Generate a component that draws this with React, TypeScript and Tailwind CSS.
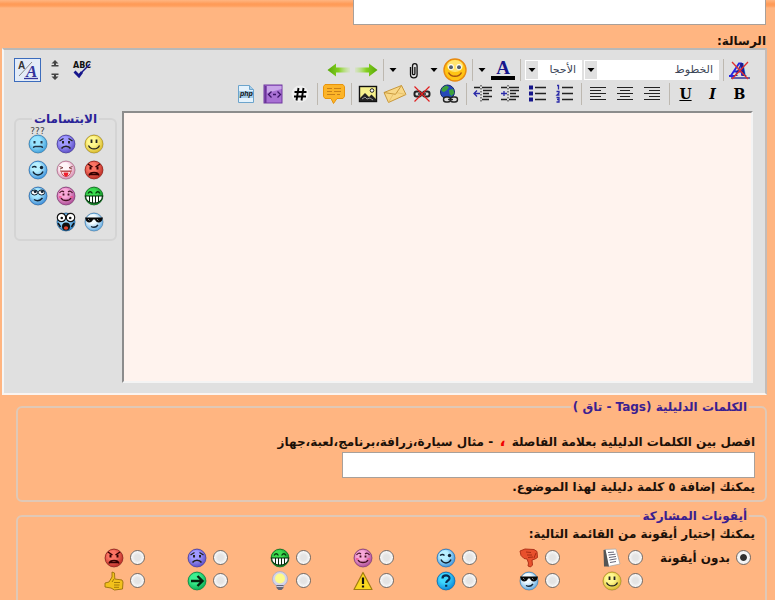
import { useState } from "react";
import type { ReactNode } from "react";

type Mood =
  | "smile"
  | "frown"
  | "confused"
  | "mad"
  | "tongue"
  | "wink"
  | "grin"
  | "blush"
  | "rolleyes"
  | "cool"
  | "eek";

// light and dark colour of every ball
const ballColors: Record<string, [string, string]> = {
  smile: ["#fff890", "#d8b828"],
  frown: ["#a09aff", "#5a4cc4"],
  confused: ["#98e4ff", "#3f9cd8"],
  mad: ["#fb7464", "#b82a22"],
  tongue: ["#fff4f8", "#d88cb0"],
  wink: ["#b8f0ff", "#3a90dc"],
  grin: ["#3cdc50", "#0f8a24"],
  blush: ["#f8a8d8", "#a84a94"],
  rolleyes: ["#a8e8ff", "#3a88d4"],
  cool: ["#f2fbff", "#5fa8e0"],
  eek: ["#9fdcff", "#2b7cc0"],
  question: ["#3fd8ff", "#0a86d8"],
  arrow: ["#3cf090", "#0aa850"],
};

const Ball = ({ kind, children }: { kind: string; children: ReactNode }) => {
  const [light, dark] = ballColors[kind];
  return (
    <svg viewBox="0 0 20 20" className="w-5 h-5 overflow-visible" fill="none" aria-hidden="true">
      <defs>
        <radialGradient id={`ball-${kind}`} cx="0.4" cy="0.35" r="0.7">
          <stop offset="0.35" stopColor={light} />
          <stop offset="1" stopColor={dark} />
        </radialGradient>
      </defs>
      <circle cx="10" cy="10" r="8.8" fill={`url(#ball-${kind})`} stroke={dark} strokeWidth="1" />
      <circle cx="10" cy="10" r="9.2" stroke="#404040" strokeOpacity="0.4" strokeWidth="0.6" />
      {children}
    </svg>
  );
};

const features: Record<Mood, ReactNode> = {
  smile: (
    <>
      <path d="M7.5 5.5V9M12.5 5.500V9" stroke="#222" strokeWidth="1.8" />
      <path d="M4.5 11.5c2 4.6 9 4.6 11 0" stroke="#222" strokeWidth="1.2" />
    </>
  ),
  frown: (
    <>
      <path d="M3.5 7l4-2.5M16.5 7l-4-2.5" stroke="#222" strokeWidth="1.3" />
      <path d="M7 7v2.5M13 7v2.5" stroke="#222" strokeWidth="2" />
      <path d="M5.5 14.5c2-3 7-3 9 0" stroke="#222" strokeWidth="1.5" />
    </>
  ),
  confused: (
    <>
      <path d="M6.5 7v2.5M13.5 7v2.5" stroke="#234" strokeWidth="2" />
      <path d="M5.5 14q0-1.500 1.500-1.500h6q1.500 0 1.500 1.500" stroke="#234" strokeWidth="1.4" />
    </>
  ),
  mad: (
    <>
      <path d="M4 4l4.5 3M16 4l-4.5 3" stroke="#300" strokeWidth="1.5" />
      <path d="M6.5 6.5v3M13.5 6.5v3" stroke="#300" strokeWidth="2" />
      <path d="M5 15.5c1-4 9-4 10 0M6 14.5h8" stroke="#300" strokeWidth="1.3" />
    </>
  ),
  tongue: (
    <>
      <path d="M3.5 6.5l3.500 1.2M16.5 6.5L13 7.7M4 9l3-1.3M16 9l-3-1.3" stroke="#733" strokeWidth="0.9" />
      <path d="M4 11h12" stroke="#a33" strokeWidth="0.9" />
      <path d="M5.5 11.500h9c0 6.500-9 6.500-9 0z" fill="#fff" stroke="#a33" strokeWidth="0.8" />
      <path d="M7.500 12.500h5c0 5.500-5 5.500-5 0z" fill="#f01c2c" />
    </>
  ),
  wink: (
    <>
      <path d="M4 7.500q2.500-2 4.500 0" stroke="#123" strokeWidth="1.3" />
      <circle cx="13.500" cy="7.500" r="1.700" fill="#123" />
      <path d="M5 11.500c2 4.500 8 4.500 10 0" stroke="#123" strokeWidth="1.5" />
    </>
  ),
  grin: (
    <>
      <path d="M4 7.5q2.200-3.5 4.400 0M11.600 7.500q2.200-3.500 4.400 0" stroke="#053a0c" strokeWidth="1.3" />
      <path d="M1.500 10h17c0 9.500-17 9.500-17 0z" fill="#fff" stroke="#052a0c" strokeWidth="1.1" />
      <path d="M5.500 10v6M8.500 10v7M11.500 10v7M14.500 10v6" stroke="#052a0c" strokeWidth="1" />
    </>
  ),
  blush: (
    <>
      <path d="M3.5 7q2-3 4.500-1M12 6q2.500-2 4.500 1" stroke="#412" strokeWidth="1.2" />
      <path d="M7.500 7.500v2M12.500 7.500v2" stroke="#412" strokeWidth="1.8" />
      <path d="M5 12c2 3.400 8 3.400 10 0" stroke="#412" strokeWidth="1.4" />
      <path d="M3 11h2.500M14.500 11H17" stroke="#f0508c" strokeWidth="1.5" />
    </>
  ),
  rolleyes: (
    <>
      <ellipse cx="6.5" cy="6.500" rx="3.2" ry="2.500" fill="#fff" stroke="#123" />
      <ellipse cx="13.500" cy="6.500" rx="3.2" ry="2.500" fill="#fff" stroke="#123" />
      <circle cx="7.200" cy="5.500" r="1.500" fill="#123" />
      <circle cx="14.200" cy="5.500" r="1.500" fill="#123" />
      <path d="M6 13.500c3 2 6 1.500 8.500-1.500" stroke="#123" strokeWidth="1.400" />
    </>
  ),
  cool: (
    <>
      <path d="M1 5.500h18l-.5 1.500c-.5 4.500-6.500 4.500-7.500.5H9c-1 4-7 4-7.500-.5z" fill="#080808" />
      <path d="M4 7l1.500 1.500M13 7l1.500 1.500" stroke="#aaa" strokeWidth="0.800" />
      <path d="M7 14.500c3 1.500 5.500.5 7-1.500" stroke="#123" strokeWidth="1.300" />
    </>
  ),
  eek: (
    <>
      <circle cx="5.5" cy="5.500" r="4.200" fill="#fff" stroke="#111" strokeWidth="1.200" />
      <circle cx="14.500" cy="5.500" r="4.200" fill="#fff" stroke="#111" strokeWidth="1.200" />
      <circle cx="5.800" cy="6" r="1.300" fill="#111" />
      <circle cx="14.200" cy="6" r="1.300" fill="#111" />
      <path d="M2 11l2.500 4M18 11l-2.500 4" stroke="#111" strokeWidth="1.500" />
      <circle cx="10" cy="14.500" r="4" fill="#111" />
      <ellipse cx="10" cy="16" rx="2.200" ry="1.800" fill="#e0442c" />
    </>
  ),
};

const Face = ({ mood }: { mood: Mood }) => <Ball kind={mood}>{features[mood]}</Ball>;

// Editor smilies, right to left
const smilies: Mood[] = [
  "smile", "frown", "confused",
  "mad", "tongue", "wink",
  "grin", "blush", "rolleyes",
  "cool", "eek",
];

const PageIcon = () => (
  <svg viewBox="0 0 20 20" className="w-5 h-5" fill="none" aria-hidden="true">
    <path d="M3 1.500l11-.5 4 15-12 2.500z" fill="#fff" stroke="#aaa" strokeWidth="0.800" />
    <path d="M1.500 2l2-.3L7 18.500l-5 0z" fill="#555" />
    <path d="M6 4.500l6-.4M6.500 7l7-.8M7 9.500l7-1M7.500 12l7-1.200M8 14.500l6-1" stroke="#667" strokeWidth="1" />
  </svg>
);

const ThumbDown = () => (
  <svg viewBox="0 0 20 20" className="w-5 h-5" aria-hidden="true">
    <path
      d="M1 3l5-2 9 .5 3 2 .5 6-2.500 1.500-3 1 .5 5-2 2-2.500-1 .5-3-1.500-4-3-.5-3-3z"
      fill="#e8502c" stroke="#a82a14" strokeWidth="0.900"
    />
    <path d="M7 4l5 .5M8 7l5 0M9 9.500l5-.5M17 5l-2 5" stroke="#a02810" strokeWidth="0.900" fill="none" />
  </svg>
);

const ThumbUp = () => (
  <svg viewBox="0 0 20 20" className="w-5 h-5" aria-hidden="true">
    <path
      d="M8 1l2.500 1 .3 6L18 9l1 2-.5 7-8 1L7 17l-6-1 0-4 4-1 3-5z"
      fill="#f2c11c" stroke="#9a7208" strokeWidth="0.900"
    />
    <path d="M10 11.500h6M10 14h5.500M10 16.300h5M8 11l2-3" stroke="#9a7208" strokeWidth="0.900" fill="none" />
  </svg>
);

const Bulb = () => (
  <svg viewBox="0 0 20 20" className="w-5 h-5" aria-hidden="true">
    <circle cx="10" cy="8" r="7.500" fill="#d4d4ea" stroke="#a8a8c4" strokeWidth="0.800" />
    <circle cx="10" cy="7.500" r="5" fill="#fdfb8c" />
    <path d="M6.500 14h7v3l-2 2h-3l-2-2z" fill="#667" />
    <path d="M6.500 15.500h7" stroke="#ccd" />
  </svg>
);

const Warning = () => (
  <svg viewBox="0 0 20 20" className="w-5 h-5" aria-hidden="true">
    <path d="M10 1.500L19 18.500H1z" fill="#fbd820" stroke="#a07c10" strokeWidth="1.200" strokeLinejoin="round" />
    <path d="M10 6.500v6.500M10 14.500v2" stroke="#111" strokeWidth="2.200" />
  </svg>
);

const Question = () => (
  <Ball kind="question">
    <path d="M6.500 7.500c0-4 7-4 7-.3 0 2.300-3.300 2.300-3.300 4.800M10.200 13.800v2" stroke="#082a50" strokeWidth="2.200" />
  </Ball>
);

const ArrowBall = () => (
  <Ball kind="arrow">
    <path d="M4 10h11M10.500 5l5 5-5 5" stroke="#04220f" strokeWidth="2.400" />
  </Ball>
);

const postIcons: { name: string; icon: ReactNode }[] = [
  { name: "post", icon: <PageIcon /> },
  { name: "thumbs down", icon: <ThumbDown /> },
  { name: "wink", icon: <Face mood="wink" /> },
  { name: "blush", icon: <Face mood="blush" /> },
  { name: "grin", icon: <Face mood="grin" /> },
  { name: "frown", icon: <Face mood="frown" /> },
  { name: "mad", icon: <Face mood="mad" /> },
  { name: "smile", icon: <Face mood="smile" /> },
  { name: "cool", icon: <Face mood="cool" /> },
  { name: "question", icon: <Question /> },
  { name: "warning", icon: <Warning /> },
  { name: "idea", icon: <Bulb /> },
  { name: "arrow", icon: <ArrowBall /> },
  { name: "thumbs up", icon: <ThumbUp /> },
];

const Tool = ({ label, children }: { label: string; children: ReactNode }) => (
  <button type="button" aria-label={label} className="w-[27px] h-6 shrink-0 flex items-center justify-center">
    {children}
  </button>
);

const Separator = () => (
  <div className="w-[7px] h-[22px] shrink-0 flex pr-0.5">
    <div className="w-px bg-[#bdb8b0]" />
  </div>
);

const Caret = () => (
  <svg viewBox="0 0 8 4" className="w-2 h-1" aria-hidden="true">
    <path d="M0.500 0h7L4 4z" fill="#000" />
  </svg>
);

const DropArrow = ({ label }: { label: string }) => (
  <button type="button" aria-label={label} className="w-3.5 h-6 shrink-0 flex items-center justify-center">
    <Caret />
  </button>
);

const ToolSelect = ({ label, text, width }: { label: string; text: string; width: string }) => (
  <div className={`relative h-5 shrink-0 bg-white ${width}`}>
    <select
      aria-label={label}
      className="appearance-none w-full h-5 pr-1.5 pl-3.5 bg-transparent text-[11px] leading-5 font-normal text-[#3c4658]"
    >
      <option>{text}</option>
    </select>
    <span className="absolute left-px top-px w-3 h-[18px] bg-[#e0e0e0] flex items-center justify-center pointer-events-none">
      <Caret />
    </span>
  </div>
);

const Glyph = ({ children }: { children: ReactNode }) => (
  <svg viewBox="0 0 20 20" className="w-5 h-5" fill="none" stroke="#222" aria-hidden="true">
    {children}
  </svg>
);

const GreenArrow = ({ flip }: { flip?: boolean }) => (
  <svg viewBox="0 0 26 16" className={flip ? "w-[26px] h-4 -scale-x-100" : "w-[26px] h-4"} aria-hidden="true">
    <defs>
      <linearGradient id="green-arrow" x1="0" x2="1">
        <stop offset="0" stopColor="#b8e870" stopOpacity="0.2" />
        <stop offset="0.5" stopColor="#84d020" />
        <stop offset="1" stopColor="#58a808" />
      </linearGradient>
    </defs>
    <path d="M2 5.500h14V1.500l8.500 6.500-8.500 6.500v-4H2z" fill="url(#green-arrow)" />
  </svg>
);

const RowOne = () => (
  <div className="flex items-center">
    <Tool label="Remove formatting">
      <svg viewBox="0 0 24 22" className="w-6 h-[22px]" fill="none" aria-hidden="true">
        <path d="M3 16.500L11 4.500h2l1 12M6 12.500h7M1 17h6" stroke="#2424e0" strokeWidth="1.800" />
        <text x="7" y="17" fontSize="18" fontWeight="bold" fontStyle="italic" fontFamily="Liberation Serif, serif" fill="#1c1c90" direction="ltr">A</text>
        <path d="M3 19h19" stroke="#1c1c90" strokeWidth="1.300" />
        <path d="M4 3l16 17M20 3L4 20" stroke="#e03030" strokeWidth="1.300" />
      </svg>
    </Tool>
    <Separator />
    <ToolSelect label="الخط" text="الخطوط" width="w-[135px]" />
    <ToolSelect label="الحجم" text="الأحجا" width="w-[57px] mx-0.5" />
    <Separator />
    <Tool label="Text color">
      <svg viewBox="0 0 26 22" className="w-[26px] h-[22px]" aria-hidden="true">
        <text x="13" y="15" textAnchor="middle" fontSize="19" fontWeight="bold" fontFamily="Liberation Serif, serif" fill="#16168c">A</text>
        <rect x="1" y="17" width="24" height="4" fill="#000" />
      </svg>
    </Tool>
    <DropArrow label="Choose color" />
    <Separator />
    <Tool label="Smilies">
      <svg viewBox="0 0 24 24" className="w-6 h-6" aria-hidden="true">
        <circle cx="12" cy="12" r="11" fill="#ffc414" stroke="#e88a10" strokeWidth="1.400" />
        <ellipse cx="12" cy="8" rx="8" ry="6" fill="#ffe470" />
        <ellipse cx="8" cy="9" rx="2.800" ry="3" fill="#fff" />
        <ellipse cx="16" cy="9" rx="2.800" ry="3" fill="#fff" />
        <circle cx="8" cy="9.300" r="2" fill="#56606c" />
        <circle cx="16" cy="9.300" r="2" fill="#56606c" />
        <path d="M5.500 14.500c2.500 5 10.500 5 13 0" fill="none" stroke="#a85410" strokeWidth="1.500" />
      </svg>
    </Tool>
    <DropArrow label="More smilies" />
    <Tool label="Attachments">
      <Glyph>
        <path d="M6.500 7v7.500a3.300 3.300 0 0 0 6.600 0V6a2.300 2.300 0 0 0-4.600 0v7.500a1.200 1.200 0 0 0 2.400 0V7" stroke="#111" strokeWidth="1.300" />
      </Glyph>
    </Tool>
    <DropArrow label="Attachment list" />
    <Separator />
    <Tool label="Redo"><GreenArrow /></Tool>
    <Tool label="Undo"><GreenArrow flip /></Tool>

    <div className="mr-auto flex items-center">
      <Tool label="Spell check">
        <svg viewBox="0 0 24 22" className="w-6 h-[22px]" fill="none" aria-hidden="true">
          <text x="3" y="9" fontSize="8" fontWeight="bold" fontFamily="DejaVu Sans, sans-serif" fill="#111" direction="ltr">ABC</text>
          <path d="M8 17L20 5" stroke="#16168c" strokeWidth="1.400" />
          <path d="M4.500 12.500l4.500 4.500 3-4" stroke="#16168c" strokeWidth="2.800" />
        </svg>
      </Tool>
      <Tool label="Resize editor">
        <svg viewBox="0 0 8 20" className="w-2 h-5" fill="#444" aria-hidden="true">
          <path d="M4 0l3.500 3.500H5V5h2.500v1.500h-7V5H3V3.500H.5zM4 20l3.500-3.500H5V15h2.500v-1.500h-7V15H3v1.500H.5z" />
        </svg>
      </Tool>
      <button
        type="button"
        aria-label="Switch editor mode"
        className="w-[27px] h-6 border border-[#3c6cbc] bg-[#e4ecf8] flex items-center justify-center"
      >
        <svg viewBox="0 0 24 22" className="w-6 h-[22px]" aria-hidden="true">
          <text x="2" y="10" fontSize="10" fontFamily="Liberation Sans, sans-serif" fill="#333" direction="ltr">A</text>
          <text x="10" y="18" fontSize="17" fontWeight="bold" fontStyle="italic" fontFamily="Liberation Serif, serif" fill="#34349c" direction="ltr">A</text>
          <path d="M3 17L16 3" stroke="#888" />
          <path d="M8 19.500h14" stroke="#34349c" strokeWidth="1.300" />
        </svg>
      </button>
    </div>
  </div>
);

const letterClass = "font-['DejaVu_Serif',serif] text-sm leading-5 font-bold text-black";

const RowTwo = () => (
  <div className="flex items-center">
    <Tool label="Bold"><span className={letterClass}>B</span></Tool>
    <Tool label="Italic"><span className={`${letterClass} italic`}>I</span></Tool>
    <Tool label="Underline"><span className={`${letterClass} underline`}>U</span></Tool>
    <Separator />
    <Tool label="Align right">
      <Glyph><path d="M2 3.500h16M7 6.500h11M2 9.500h16M7 12.500h11M2 15.500h16" strokeWidth="1.200" /></Glyph>
    </Tool>
    <Tool label="Align center">
      <Glyph><path d="M2 3.500h16M5 6.500h10M2 9.500h16M5 12.500h10M2 15.500h16" strokeWidth="1.200" /></Glyph>
    </Tool>
    <Tool label="Align left">
      <Glyph><path d="M2 3.500h16M2 6.500h11M2 9.500h16M2 12.500h11M2 15.500h16" strokeWidth="1.200" /></Glyph>
    </Tool>
    <Separator />
    <Tool label="Ordered list">
      <Glyph>
        <path d="M8 3.500h11M8 9.500h11M8 15.500h11" strokeWidth="1.300" />
        <path d="M3 1.500h1.500v4M2.500 7.500h2.500v1.500L3 11h2.500M2.500 13.500h2.500v4.500H2.500M3 15.500h2" stroke="#2a2aa8" strokeWidth="1.300" />
      </Glyph>
    </Tool>
    <Tool label="Bulleted list">
      <Glyph>
        <path d="M8 3.500h11M8 9.500h11M8 15.500h11" strokeWidth="1.300" />
        <path d="M2 1.500h4v4H2zM2 7.500h4v4H2zM2 13.500h4v4H2z" fill="#16168c" stroke="none" />
      </Glyph>
    </Tool>
    <Tool label="Indent">
      <Glyph>
        <path d="M1 3.500h6M9 3.500h10M10 6.500h9M10 9.500h6M10 12.500h9M1 15.500h6M9 15.500h7" strokeWidth="1.500" />
        <path d="M8 1v17" strokeDasharray="1.500 1.500" />
        <path d="M1 9.500h6M4 7v5" stroke="#2a2aa8" strokeWidth="1.300" />
      </Glyph>
    </Tool>
    <Tool label="Outdent">
      <Glyph>
        <path d="M1 3.500h6M9 3.500h10M10 6.500h9M10 9.500h6M10 12.500h9M9 15.500h7" strokeWidth="1.500" />
        <path d="M8 1v17" strokeDasharray="1.500 1.500" />
        <path d="M1 9.500h6M4 6.500l-3 3 3 3" stroke="#2a2aa8" strokeWidth="1.300" />
      </Glyph>
    </Tool>
    <Separator />
    <Tool label="Insert link">
      <Glyph>
        <circle cx="8.500" cy="8" r="7" fill="#2448b8" stroke="#14246c" />
        <path d="M3 4l4-2.500 3 1.500-2 3-3 2-2.500-1zM10 6l4-1 1.500 4-3 3-2-2z" fill="#3ca03c" stroke="none" />
        <rect x="4.500" y="13" width="7" height="5" rx="2.500" fill="#ddd" stroke="#222" strokeWidth="1.400" />
        <rect x="11.500" y="13" width="7" height="5" rx="2.500" fill="#ddd" stroke="#222" strokeWidth="1.400" />
        <path d="M9 15.500h5" stroke="#222" strokeWidth="1.300" />
      </Glyph>
    </Tool>
    <Tool label="Remove link">
      <Glyph>
        <rect x="2.500" y="7.500" width="6.500" height="5" rx="2" stroke="#222" strokeWidth="2" />
        <rect x="11" y="7.500" width="6.500" height="5" rx="2" stroke="#222" strokeWidth="2" />
        <path d="M6 10h8" stroke="#222" strokeWidth="1.500" />
        <path d="M2.500 2.500l15 15M17.500 2.500l-15 15" stroke="#e02020" strokeWidth="1.200" />
      </Glyph>
    </Tool>
    <Tool label="Insert email">
      <svg viewBox="0 0 24 20" className="w-6 h-5" fill="none" aria-hidden="true">
        <path d="M1 8.500L18.500 1.500 23 10.500 5.500 18.500z" fill="#f8d888" stroke="#c8983c" />
        <path d="M1 8.500l11.500 1.800 6-8.800" stroke="#c8983c" />
        <path d="M5.500 18.500l4.500-8M23 10.500l-9-1.800" stroke="#e0b860" strokeWidth="0.700" />
      </svg>
    </Tool>
    <Tool label="Insert image">
      <Glyph>
        <rect x="1.500" y="2.500" width="17" height="15" fill="#f6f08c" stroke="#111" strokeWidth="1.400" />
        <circle cx="14" cy="6.500" r="1.800" fill="#fff" stroke="#222" />
        <path d="M2 14l5-5 4 4 2.500-2.500L18 15v2H2z" fill="#222" stroke="none" />
        <path d="M4 15l3-2 2 2 3-1 3 2" stroke="#999" />
      </Glyph>
    </Tool>
    <Separator />
    <Tool label="Quote">
      <svg viewBox="0 0 24 22" className="w-6 h-[22px]" fill="none" aria-hidden="true">
        <path d="M3 1.500h18l1.500 2v10l-1.500 2h-6l-3.500 5-2.500-5H3l-1.500-2v-10z" fill="#fcb428" stroke="#e8940c" />
        <path d="M5 5.500h5M12 5.500h7M5 8.500h5M12 8.500h7M5 11.500h8M15 11.500h3" stroke="#c88018" strokeWidth="1.200" />
      </svg>
    </Tool>
    <Separator />
    <Tool label="Code">
      <Glyph>
        <circle cx="10" cy="10" r="8.500" fill="#f0f0f0" stroke="none" />
        <path d="M8.500 4L6.500 16.500M13.500 4l-2 12.500M4.500 8h12M4 12.500h12" stroke="#000" strokeWidth="1.900" />
      </Glyph>
    </Tool>
    <Tool label="HTML">
      <Glyph>
        <rect x="1" y="1" width="18" height="18" fill="#a870d4" stroke="#7038a0" />
        <path d="M1.500 2h2v17h-2z" fill="#6a3498" stroke="none" />
        <path d="M4 2h14.500v3L4 9z" fill="#c8a4e8" stroke="none" />
        <path d="M8.500 7.500L5.500 10.500l3 3M14.500 7.500l3 3-3 3M10 10.500h3" stroke="#3c1468" strokeWidth="1.300" />
      </Glyph>
    </Tool>
    <Tool label="PHP">
      <Glyph>
        <path d="M2.500 1.500h11l4 4v13h-15z" fill="#e4f2fc" stroke="#6ca4cc" />
        <path d="M13.500 1.500v4h4" fill="#a4cce8" stroke="#6ca4cc" />
        <rect x="3" y="7" width="14" height="7" fill="#a4cce8" stroke="none" />
        <text x="4" y="12" fontSize="7" fontWeight="bold" fontStyle="italic" fontFamily="Liberation Sans, sans-serif" fill="#111" stroke="none" direction="ltr">php</text>
      </Glyph>
    </Tool>
  </div>
);

const radioClass =
  "appearance-none w-[15px] h-[15px] m-0 shrink-0 rounded-full border border-[#6e6a68] bg-[radial-gradient(circle,#e4e4e4_30%,#ffffff_80%)] checked:bg-[radial-gradient(circle,#303030_32%,#f4f4f4_42%)]";

const groupClass = "min-w-0 border-2 border-[#e0c8b6] rounded-md";
const legendClass = "mr-1.5 px-0.5 leading-4 text-[#3a2090]";
const inputClass = "block w-[413px] max-w-full px-1 border border-[#a8a09a] bg-white";

export default function App() {
  const [postIcon, setPostIcon] = useState("none");
  const [message, setMessage] = useState("");

  return (
    <div
      dir="rtl"
      className="h-screen overflow-hidden bg-[#ffb581] font-['DejaVu_Sans',sans-serif] text-xs font-bold text-[#1c1008]"
    >
      {/* Title box, under the orange edge of the panel above */}
      <div className="h-[34px] pr-[9px] bg-[linear-gradient(#ffb581_0px,#ff9a56_4px,#ff9f5e_6px,#ffb581_8px)]">
        <input type="text" aria-label="العنوان" className={`${inputClass} h-[25px] border-t-0`} />
      </div>

      <label htmlFor="message" className="block h-3.5 pr-[9px] leading-[14px]">الرسالة:</label>

      {/* Editor */}
      <div className="mr-2 ml-0.5 border-2 border-t-[#b8b8b8] border-l-[#f6f6f6] border-r-[#c4bcb8] border-b-[#fbf4f0] bg-[#e0e0e0] pt-2 pb-2.5 pl-2.5 pr-3">
        <RowOne />
        <RowTwo />
        <div className="mt-[5px] flex items-start gap-[5px]">
          <textarea
            id="message"
            value={message}
            onChange={(e) => setMessage(e.target.value)}
            className="flex-1 min-w-0 h-[272px] resize-none border-2 border-t-[#8c8c8c] border-l-[#8c8c8c] border-r-[#f4f4f4] border-b-[#f4f4f4] bg-[#fff3ee] p-2 font-normal"
          />
          <fieldset className="w-[103px] border-2 border-[#d4d4d4] rounded-md pb-1">
            <legend className="mx-auto px-0.5 leading-4 text-[#2c2498]">الابتسامات</legend>
            <div className="pt-1 grid grid-cols-[28px_28px_28px] justify-center">
              {smilies.map((mood) => (
                <button key={mood} type="button" aria-label={mood} className="relative h-[26px] flex items-center justify-center">
                  <Face mood={mood} />
                  {mood === "confused" && (
                    <span className="absolute -top-1 inset-x-0 text-center text-[9px] leading-[9px] font-normal text-[#444]">???</span>
                  )}
                </button>
              ))}
            </div>
          </fieldset>
        </div>
      </div>

      {/* Tags */}
      <fieldset className={`${groupClass} mt-1 mr-2 ml-4 pr-2.5 pb-1`}>
        <legend className={legendClass}>الكلمات الدليلية (Tags - تاق )</legend>
        <label htmlFor="tags" className="block pt-[18px] leading-4">
          افصل بين الكلمات الدليلية بعلامة الفاصلة <span className="px-0.5 text-base leading-4 text-[#f00000]">،</span> - مثال سيارة،زرافة،برنامج،لعبة،جهاز
        </label>
        <input id="tags" type="text" className={`${inputClass} mt-0.5 h-[26px]`} />
        <p className="leading-[18px]">يمكنك إضافة ٥ كلمة دليلية لهذا الموضوع.</p>
      </fieldset>

      {/* Post icons */}
      <fieldset className={`${groupClass} mt-1.5 mr-2 ml-4 pr-2.5 pb-5`}>
        <legend className={legendClass}>أيقونات المشاركة</legend>
        <p className="pt-0.5 pb-1 leading-4">يمكنك إختيار أيقونة من القائمة التالية:</p>
        <div className="flex">
          <label className="w-[110px] h-[23px] pr-1 shrink-0 flex items-center gap-1.5 whitespace-nowrap">
            <input
              type="radio"
              name="post-icon"
              className={radioClass}
              checked={postIcon === "none"}
              onChange={() => setPostIcon("none")}
            />
            بدون أيقونة
          </label>
          <div className="grid grid-cols-[repeat(7,83px)]">
            {postIcons.map(({ name, icon }) => (
              <label key={name} className="h-[23px] pr-0.5 flex items-center gap-1.5">
                <input
                  type="radio"
                  name="post-icon"
                  aria-label={name}
                  className={radioClass}
                  checked={postIcon === name}
                  onChange={() => setPostIcon(name)}
                />
                {icon}
              </label>
            ))}
          </div>
        </div>
      </fieldset>
    </div>
  );
}
